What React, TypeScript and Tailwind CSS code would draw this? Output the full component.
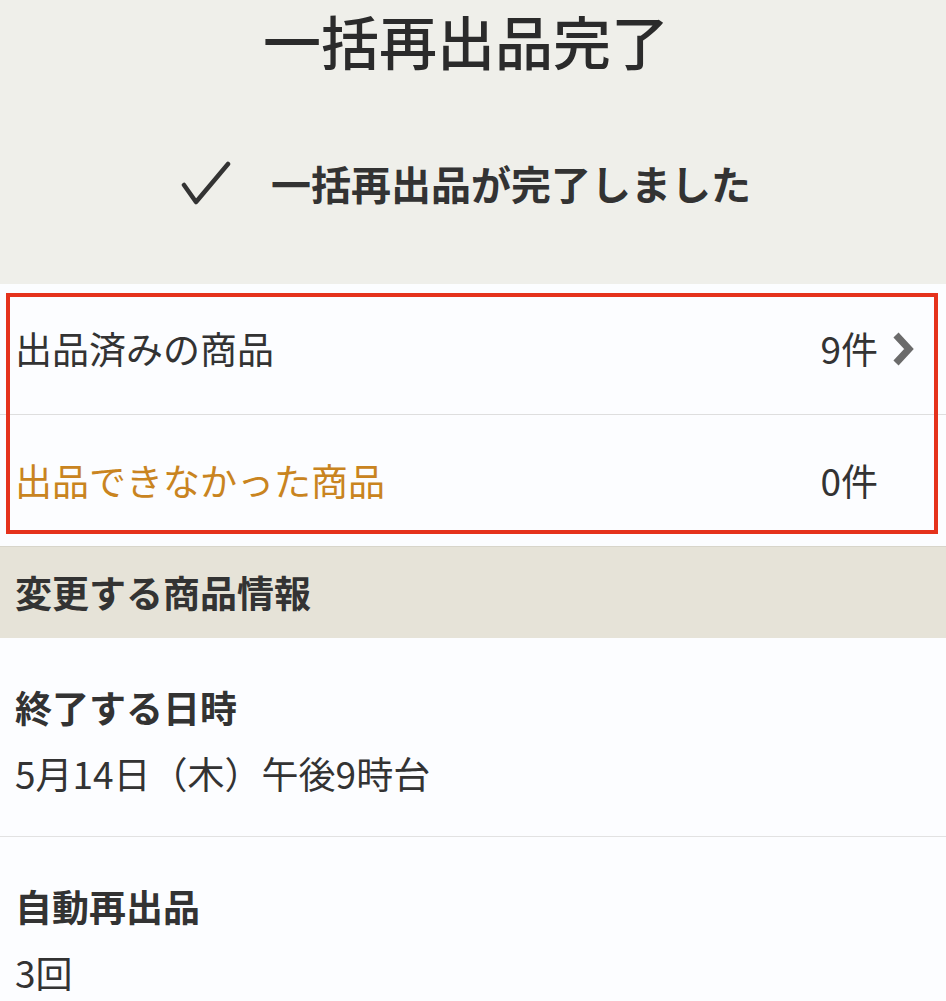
import React from 'react';

const font = { fontFamily: '"Noto Sans CJK JP", "Noto Sans", sans-serif' };

function Check() {
  return (
    <svg width="50" height="44" viewBox="0 0 50 44" className="text-[#333]">
      <path d="M3 24 L15 41 L47 3" fill="none" stroke="currentColor" strokeWidth="4.5" strokeLinecap="round" strokeLinejoin="round" />
    </svg>
  );
}

function Chevron() {
  return (
    <svg width="24" height="34" viewBox="0 0 24 34">
      <path d="M5 3 L18 17 L5 31" fill="none" stroke="#6b6b6b" strokeWidth="7" strokeLinejoin="miter" />
    </svg>
  );
}

export default function App() {
  return (
    <div className="w-[946px] min-h-[1001px] bg-[#fcfdff] text-[#333]" style={font}>
      <div className="bg-[#efefea] h-[284px] pt-[5px] flex flex-col items-center">
        <div className="text-[58px] leading-[70px] font-medium whitespace-nowrap pr-[14px] text-[#2b2b2b]">一括再出品完了</div>
        <div className="flex items-center mt-[83px] gap-[40px] pr-[14px]">
          <Check />
          <span className="text-[40px] leading-[50px] font-bold text-[#333]">一括再出品が完了しました</span>
        </div>
      </div>

      <div className="relative">
        <div className="flex items-center justify-between h-[131px] pl-[15px] pr-[31px] border-b border-[#dedede]">
          <span className="text-[37px]">出品済みの商品</span>
          <div className="flex items-center gap-[13px]">
            <span className="text-[37px]">9件</span>
            <Chevron />
          </div>
        </div>
        <div className="flex items-center justify-between h-[131px] pl-[15px] pr-[31px]">
          <span className="text-[37px] text-[#c98420]">出品できなかった商品</span>
          <div className="flex items-center gap-[13px]">
            <span className="text-[37px]">0件</span>
            <span className="w-[24px]" />
          </div>
        </div>
        <div className="absolute left-[6px] top-[9px] w-[932px] h-[241px] border-4 border-[#e5321c] pointer-events-none" />
      </div>

      <div className="bg-[#e6e3d8] h-[92px] flex items-center pl-[15px] border-t border-[#d8d5ca]">
        <span className="text-[37px] font-bold">変更する商品情報</span>
      </div>

      <div className="pl-[15px] pt-[36px] pb-[30px] border-b border-[#e2e2e2]">
        <div className="text-[37px] leading-[66px] font-bold">終了する日時</div>
        <div className="text-[37px] leading-[66px]">5月14日（木）午後9時台</div>
      </div>
      <div className="pl-[15px] pt-[36px] pb-[30px]">
        <div className="text-[37px] leading-[66px] font-bold">自動再出品</div>
        <div className="text-[37px] leading-[66px]">3回</div>
      </div>
    </div>
  );
}
